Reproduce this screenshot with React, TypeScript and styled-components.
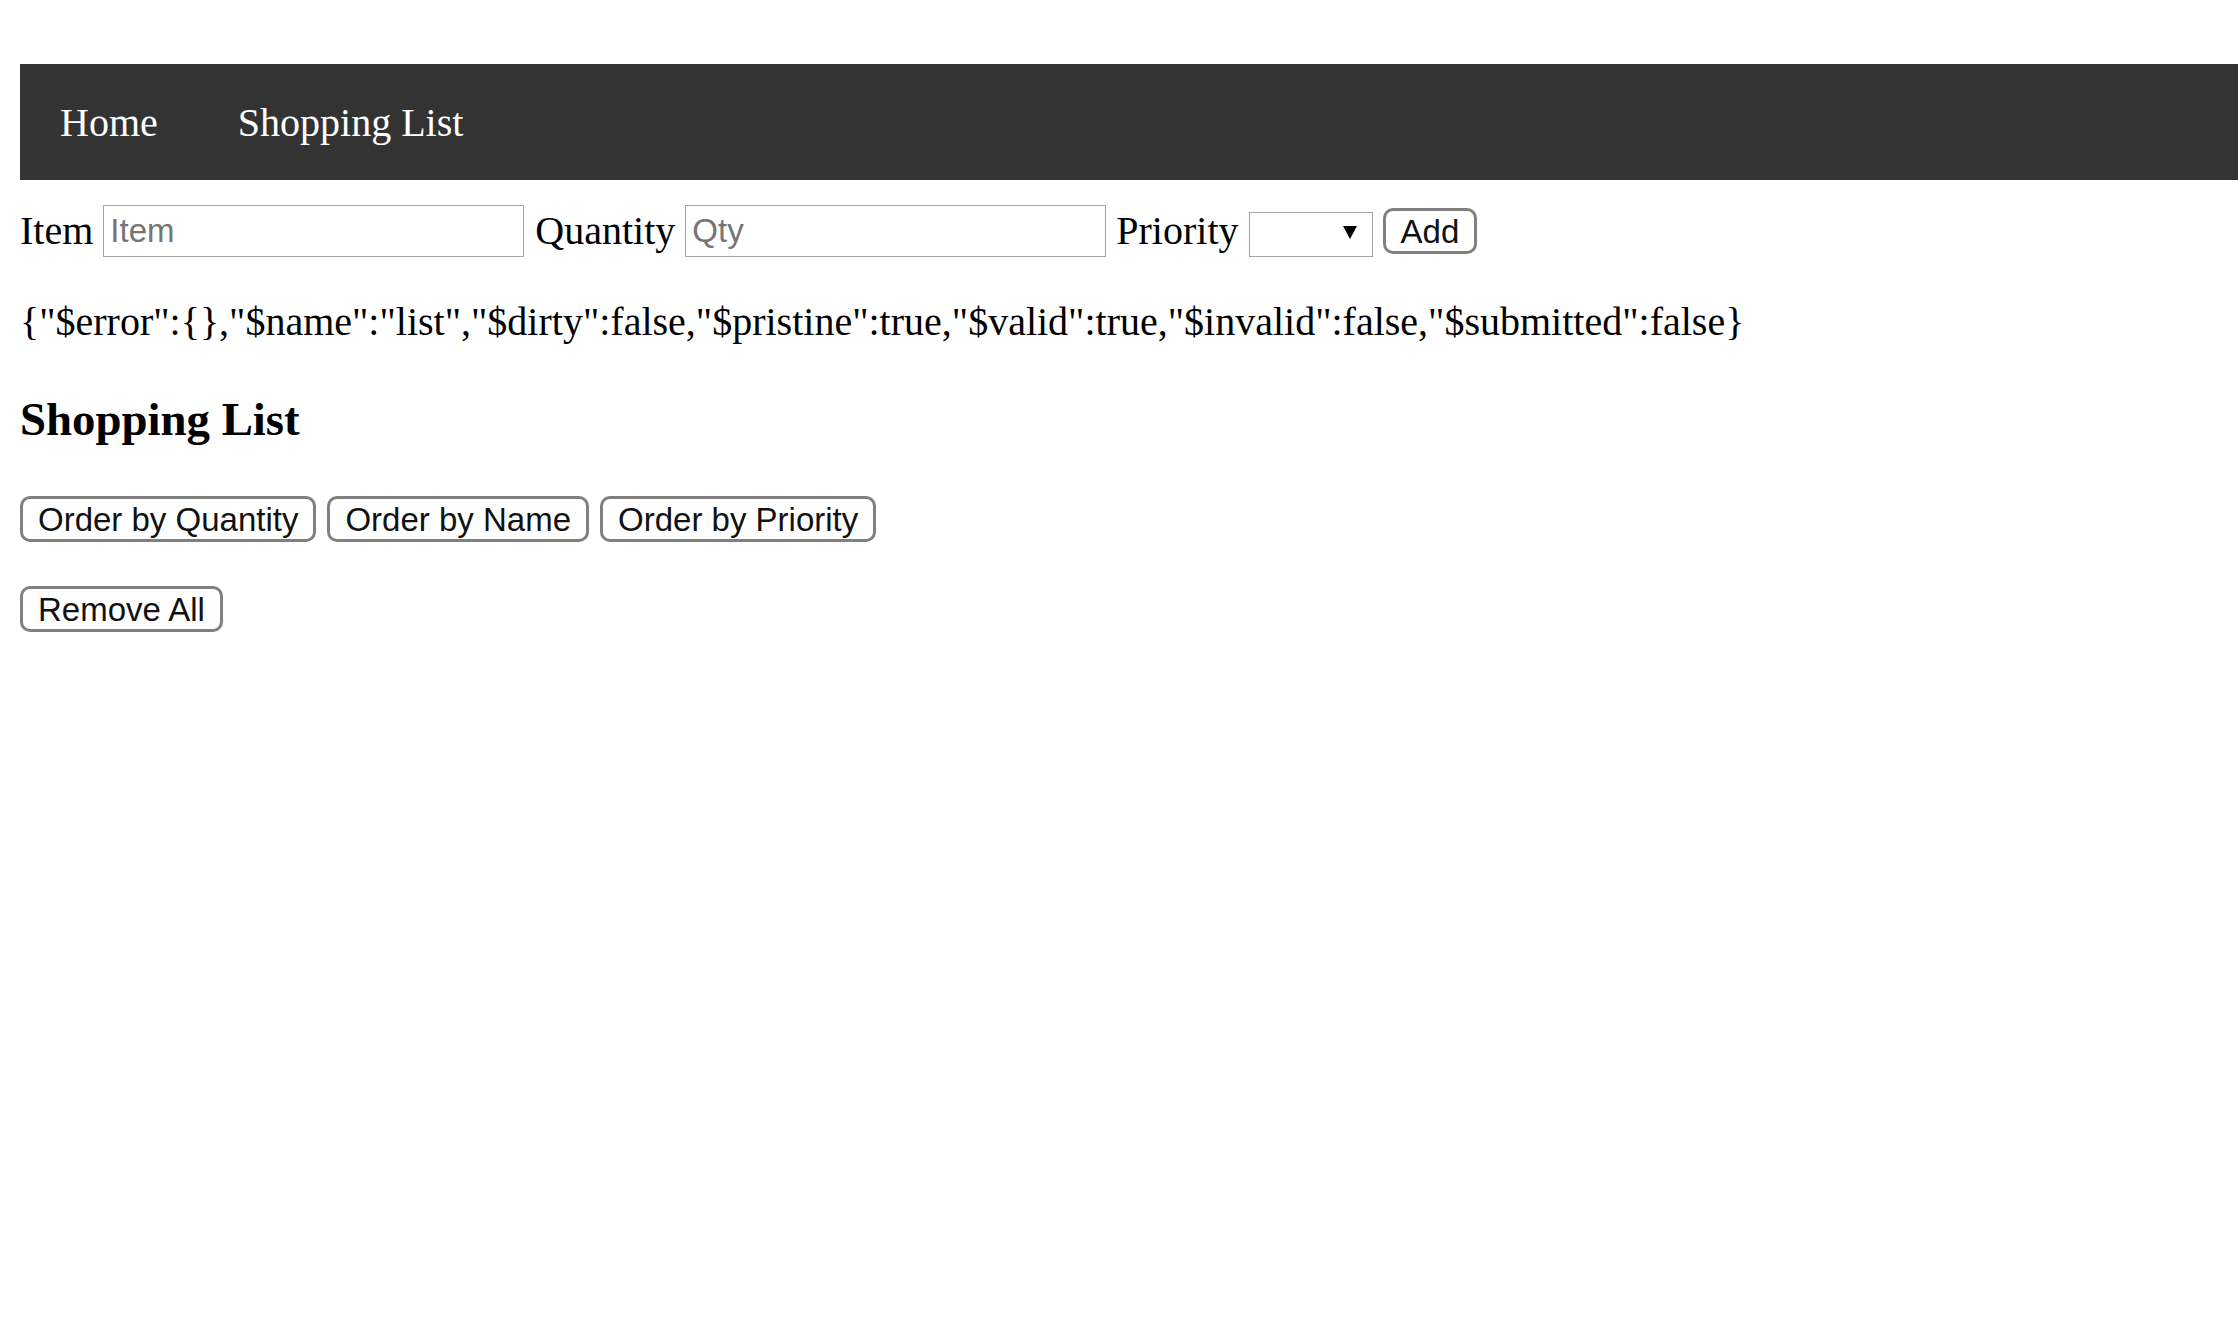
import React from "react";
import styled, { createGlobalStyle } from "styled-components";

const GlobalStyle = createGlobalStyle`
  html, body {
    margin: 0;
    padding: 0;
    background: #ffffff;
  }
  body {
    font-family: "Liberation Serif", "Times New Roman", serif;
    font-size: 40px;
    color: #000000;
  }
`;

const Page = styled.div`
  padding: 64px 0 0 20px;
`;

const NavBar = styled.ul`
  list-style: none;
  margin: 0;
  padding: 0;
  display: flex;
  background: #333333;
`;

const NavItem = styled.li`
  display: block;
`;

const NavLink = styled.a`
  display: block;
  padding: 36px 40px 34px;
  line-height: 46px;
  font-size: 40px;
  color: #ffffff;
  text-decoration: none;
`;

const FormRow = styled.form`
  display: flex;
  align-items: center;
  gap: 10px;
  margin-top: 25px;
  height: 52px;
`;

const Label = styled.label<{ $gapBefore?: number }>`
  font-size: 40px;
  line-height: 46px;
  margin-left: ${(p) => p.$gapBefore ?? 0}px;
`;

const TextInput = styled.input`
  box-sizing: border-box;
  width: 421px;
  height: 52px;
  margin: 0;
  padding: 0 6px;
  border: 1px solid #a3a3a3;
  border-radius: 0;
  font-family: "Liberation Sans", Arial, sans-serif;
  font-size: 33px;
  color: #000;
  background: #fff;
  outline: none;
  &::placeholder {
    color: #757575;
  }
`;

const SelectWrap = styled.div`
  position: relative;
  width: 124px;
  height: 45px;
`;

const Select = styled.select`
  appearance: none;
  -webkit-appearance: none;
  box-sizing: border-box;
  width: 100%;
  height: 100%;
  margin: 0;
  border: 1px solid #a3a3a3;
  border-radius: 0;
  background: #fff;
  font-family: "Liberation Sans", Arial, sans-serif;
  font-size: 33px;
  outline: none;
`;

const Arrow = styled.span`
  position: absolute;
  right: 16px;
  top: 17px;
  width: 0;
  height: 0;
  border-left: 7px solid transparent;
  border-right: 7px solid transparent;
  border-top: 13px solid #000;
  pointer-events: none;
`;

const Button = styled.button`
  box-sizing: border-box;
  height: 46px;
  margin: 0;
  padding: 2px 15px 0;
  border: 3px solid #808080;
  border-radius: 10px;
  background: #ffffff;
  font-family: "Liberation Sans", Arial, sans-serif;
  font-size: 33px;
  line-height: 36px;
  color: #111111;
  cursor: pointer;
`;

const State = styled.p`
  margin: 42px 0 0;
  font-size: 40px;
  line-height: 46px;
  white-space: nowrap;
`;

const Heading = styled.h3`
  margin: 47px 0 0;
  font-size: 46.8px;
  line-height: 54px;
  font-weight: bold;
`;

const ButtonRow = styled.div<{ $top: number }>`
  display: flex;
  gap: 11px;
  margin-top: ${(p) => p.$top}px;
`;

const formState = {
  $error: {},
  $name: "list",
  $dirty: false,
  $pristine: true,
  $valid: true,
  $invalid: false,
  $submitted: false,
};

export default function App() {
  return (
    <>
      <GlobalStyle />
      <Page>
        <NavBar>
          <NavItem>
            <NavLink href="#">Home</NavLink>
          </NavItem>
          <NavItem>
            <NavLink href="#">Shopping List</NavLink>
          </NavItem>
        </NavBar>

        <FormRow onSubmit={(e) => e.preventDefault()}>
          <Label>Item</Label>
          <TextInput placeholder="Item" />
          <Label $gapBefore={1}>Quantity</Label>
          <TextInput placeholder="Qty" />
          <Label>Priority</Label>
          <SelectWrap>
            <Select defaultValue="">
              <option value=""></option>
              <option value="low">Low</option>
              <option value="medium">Medium</option>
              <option value="high">High</option>
            </Select>
            <Arrow />
          </SelectWrap>
          <Button type="submit">Add</Button>
        </FormRow>

        <State>{JSON.stringify(formState)}</State>

        <Heading>Shopping List</Heading>

        <ButtonRow $top={50}>
          <Button>Order by Quantity</Button>
          <Button>Order by Name</Button>
          <Button>Order by Priority</Button>
        </ButtonRow>

        <ButtonRow $top={44}>
          <Button>Remove All</Button>
        </ButtonRow>
      </Page>
    </>
  );
}
